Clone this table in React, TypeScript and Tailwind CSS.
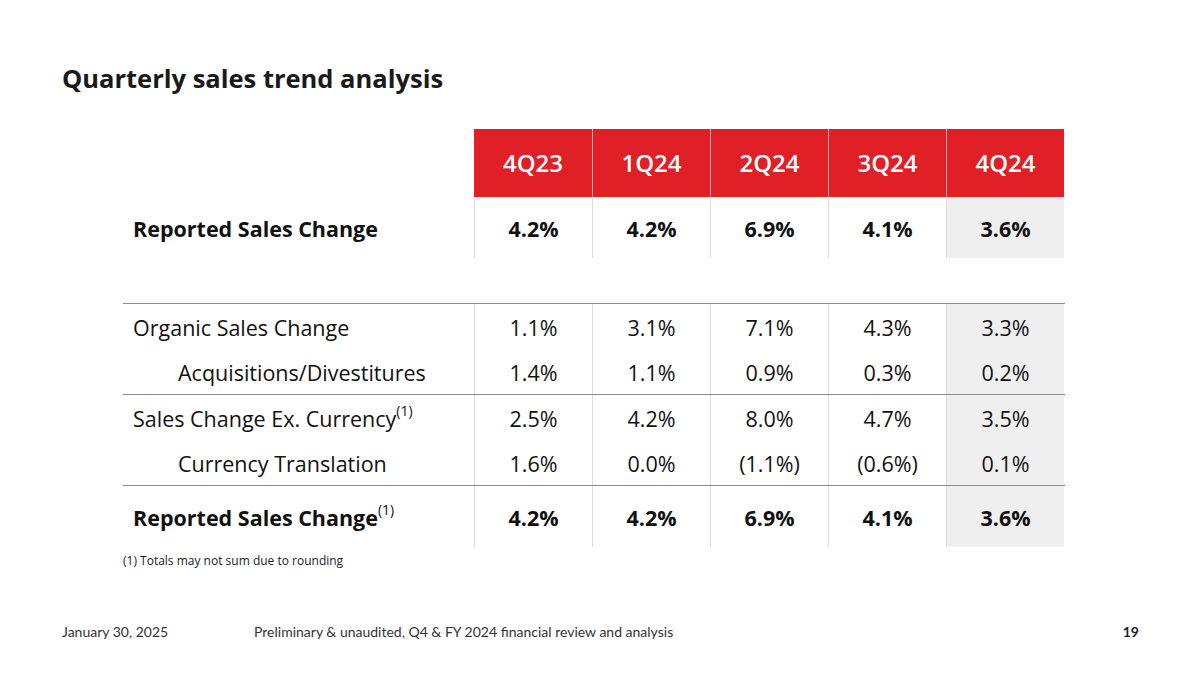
const quarters = ["4Q23", "1Q24", "2Q24", "3Q24", "4Q24"];

type Row = {
  label: string;
  values: string[];
  indent?: boolean;
  sup?: boolean;
  borderTop?: boolean;
};

const rows: Row[] = [
  { label: "Organic Sales Change", values: ["1.1%", "3.1%", "7.1%", "4.3%", "3.3%"], borderTop: true },
  { label: "Acquisitions/Divestitures", values: ["1.4%", "1.1%", "0.9%", "0.3%", "0.2%"], indent: true },
  { label: "Sales Change Ex. Currency", values: ["2.5%", "4.2%", "8.0%", "4.7%", "3.5%"], sup: true, borderTop: true },
  { label: "Currency Translation", values: ["1.6%", "0.0%", "(1.1%)", "(0.6%)", "0.1%"], indent: true },
];

const reported = ["4.2%", "4.2%", "6.9%", "4.1%", "3.6%"];

const ValueCell = ({ v, last, bold }: { v: string; last: boolean; bold?: boolean }) => (
  <div
    className={`flex items-center justify-center pt-[3px] border-l border-[#dcdcdc] ${last ? "bg-[#efefef]" : ""} ${
      bold ? "font-bold" : ""
    }`}
  >
    {v}
  </div>
);

export default function App() {
  return (
    <div className="w-[1200px] h-[675px] bg-white text-[#111] flex flex-col font-['Open_Sans',sans-serif]">
      <h1 className="pl-[62px] pt-[60px] text-[25.5px] font-bold leading-[36px] text-[#1a1a1a]">
        Quarterly sales trend analysis
      </h1>

      <div className="ml-[123px] mt-[33px] w-[942px] text-[21.5px]">
        {/* header */}
        <div className="grid grid-cols-[351px_repeat(5,118px)] h-[68px]">
          <div />
          {quarters.map((q, i) => (
            <div
              key={q}
              className={`flex items-center justify-center bg-[#e01f26] text-white text-[24px] font-semibold ${
                i > 0 ? "border-l border-[#f3a3a5]" : ""
              }`}
            >
              {q}
            </div>
          ))}
        </div>

        {/* reported row */}
        <div className="grid grid-cols-[351px_repeat(5,118px)] h-[61px]">
          <div className="flex items-center pt-[3px] pl-[10px] font-bold">Reported Sales Change</div>
          {reported.map((v, i) => (
            <ValueCell key={i} v={v} last={i === 4} bold />
          ))}
        </div>

        <div className="h-[45px]" />

        {rows.map((r) => (
          <div
            key={r.label}
            className={`grid grid-cols-[351px_repeat(5,118px)] h-[45px] ${
              r.borderTop ? "border-t border-[#8c8c8c] h-[46px]" : ""
            }`}
          >
            <div className={`flex items-center pt-[3px] ${r.indent ? "pl-[55px]" : "pl-[10px]"}`}>
              {r.label}
              {r.sup && <sup className="text-[14px] -top-[8px]">(1)</sup>}
            </div>
            {r.values.map((v, i) => (
              <ValueCell key={i} v={v} last={i === 4} />
            ))}
          </div>
        ))}

        <div className="grid grid-cols-[351px_repeat(5,118px)] h-[62px] border-t border-[#8c8c8c]">
          <div className="flex items-center pt-[3px] pl-[10px] font-bold">
            Reported Sales Change<sup className="text-[14px] font-normal -top-[8px]">(1)</sup>
          </div>
          {reported.map((v, i) => (
            <ValueCell key={i} v={v} last={i === 4} bold />
          ))}
        </div>

        <p className="mt-[5px] text-[12px] text-[#222]">(1) Totals may not sum due to rounding</p>
      </div>

      <div className="mt-auto mb-[33px] pl-[62px] pr-[61px] flex items-center text-[14px] text-[#333] font-['Lato',sans-serif]">
        <span className="w-[192px]">January 30, 2025</span>
        <span>Preliminary &amp; unaudited, Q4 &amp; FY 2024 financial review and analysis</span>
        <span className="ml-auto font-bold text-[#222]">19</span>
      </div>
    </div>
  );
}
